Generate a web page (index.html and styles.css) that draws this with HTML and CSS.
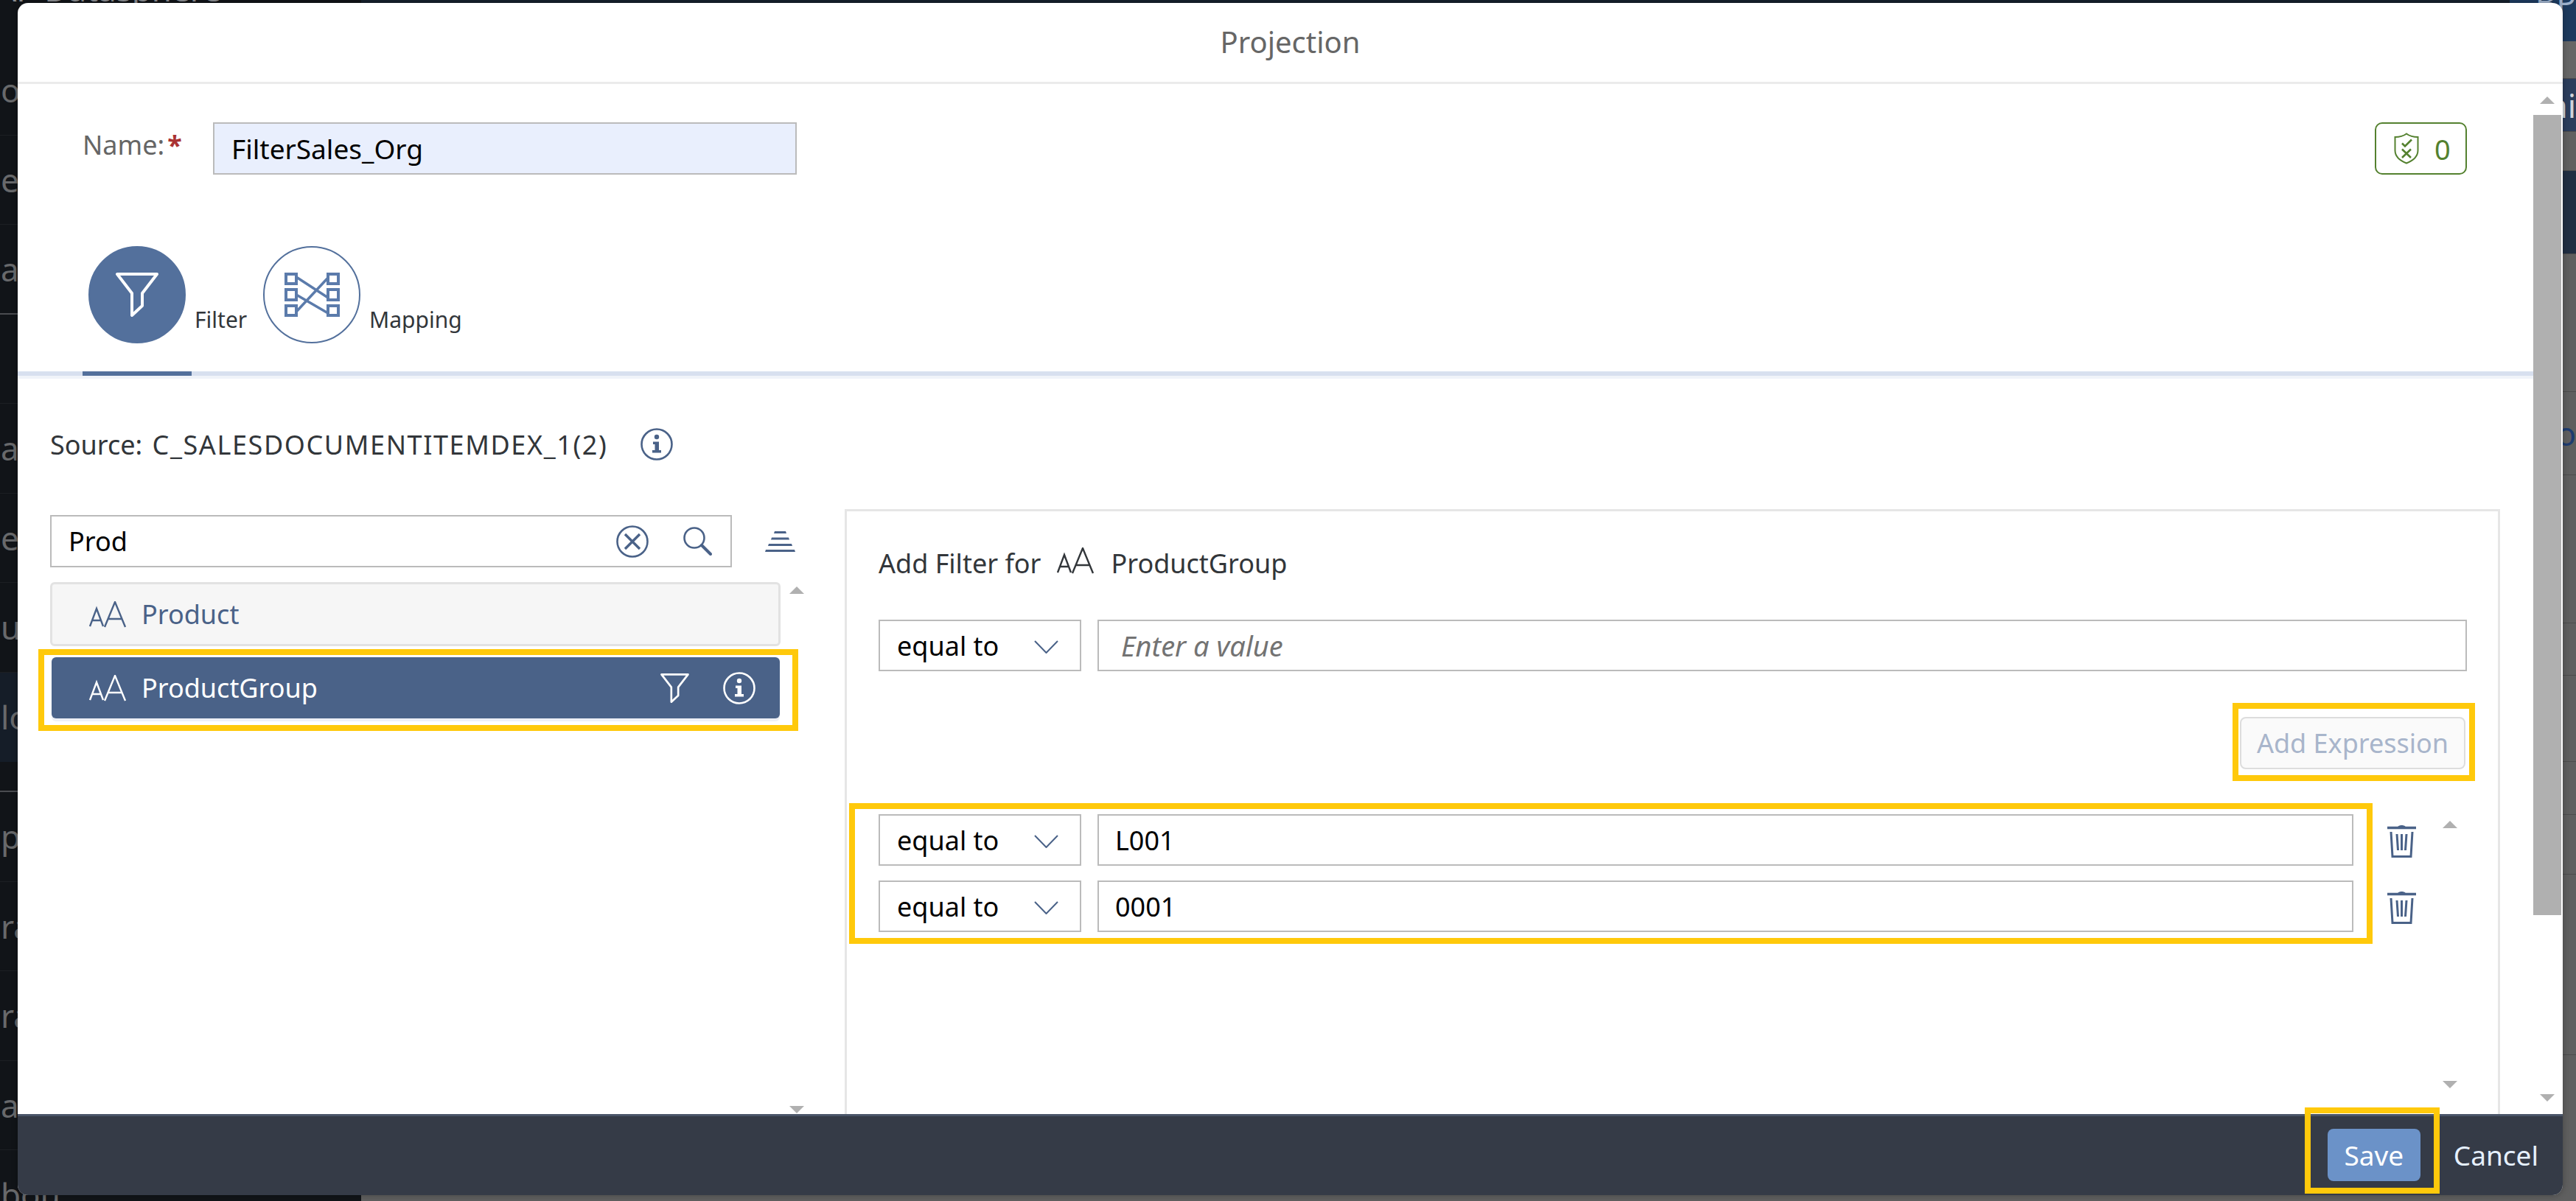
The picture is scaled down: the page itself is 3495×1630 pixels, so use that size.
FILE: index.html
```html
<!DOCTYPE html>
<html lang="en">
<head>
    <meta charset="UTF-8">
    <meta name="viewport" content="width=device-width, initial-scale=1.0">
    <title>Projection</title>
    <link rel="stylesheet" href="styles.css">
</head>
<body>
    <svg class="icon-defs" aria-hidden="true">
        <symbol id="i-funnel" viewBox="0 0 58 60">
            <path d="M2 2H56L36 28V45L22 58V28Z" fill="none" stroke="currentColor" stroke-width="4" stroke-linejoin="round"/>
        </symbol>
        <symbol id="i-info" viewBox="0 0 44 44">
            <circle cx="22" cy="22" r="20.5" fill="none" stroke="currentColor" stroke-width="2.6"/>
            <circle cx="22" cy="12" r="3.2" fill="currentColor"/>
            <path d="M17 18.5H25V30H28V33.5H16V30H19.5V22H17Z" fill="currentColor"/>
        </symbol>
        <symbol id="i-aa" viewBox="0 0 51 36">
            <path d="M1 34L10 10L19 34M4 26H16" fill="none" stroke="currentColor" stroke-width="2.4"/>
            <path d="M21 35L35 1L49 35M26 24H44" fill="none" stroke="currentColor" stroke-width="2.4"/>
        </symbol>
        <symbol id="i-chevron" viewBox="0 0 33 18">
            <path d="M1 1L16.5 17L32 1" fill="none" stroke="currentColor" stroke-width="2"/>
        </symbol>
        <symbol id="i-trash" viewBox="0 0 39 46">
            <path d="M14 5C14 1 25 1 25 5" fill="currentColor"/>
            <path d="M0 5.5H39" stroke="currentColor" stroke-width="3.5"/>
            <path d="M5 11L7 44.5H32L34 11" fill="none" stroke="currentColor" stroke-width="3"/>
            <path d="M13 14L14.5 36M19.5 14V36M26 14L24.5 36" fill="none" stroke="currentColor" stroke-width="3"/>
        </symbol>
    </svg>

    <div class="backdrop">
        <div class="bg-side">
            <div class="bg-top">SAP Datasphere</div>
            <div class="bg-row">o</div>
            <div class="bg-row">ep</div>
            <div class="bg-row bg-row-strong">at</div>
            <div class="bg-row"></div>
            <div class="bg-row">at</div>
            <div class="bg-row">er</div>
            <div class="bg-row">us</div>
            <div class="bg-row bg-row-active">lo</div>
            <div class="bg-spacer"></div>
            <div class="bg-row">pa</div>
            <div class="bg-row">ra</div>
            <div class="bg-row">ra</div>
            <div class="bg-row">at</div>
            <div class="bg-row">bou</div>
        </div>
        <div class="bg-main">
            <div class="bg-header"><div class="bg-avatar">BP</div></div>
            <div class="bg-band bg-band-a"></div>
            <div class="bg-band bg-band-b">ai</div>
            <div class="bg-band bg-band-c"></div>
            <div class="bg-band bg-band-d"></div>
            <div class="bg-band bg-band-e"></div>
            <div class="bg-band bg-band-f">o</div>
            <div class="bg-band bg-band-g"></div>
            <div class="bg-band bg-band-h"></div>
            <div class="bg-band bg-band-i"></div>
            <div class="bg-band bg-band-j"></div>
            <div class="bg-band bg-band-k"></div>
            <div class="bg-band bg-band-l"></div>
        </div>
    </div>

    <div class="modal">
        <div class="modal-header">Projection</div>

        <div class="modal-body">
            <div class="modal-main">
                <div class="name-row">
                    <div class="name-label">Name:<span class="required">*</span></div>
                    <div class="field name-field">FilterSales_Org</div>
                    <div class="status-badge">
                        <svg class="shield-icon" viewBox="0 0 34 43">
                            <path d="M17 1.5C21 4.5 27 6 32.5 6V24C32.500 32 26 38 17 41.500C8 38 1.500 32 1.500 24V6C7 6 13 4.500 17 1.500Z" fill="none" stroke="currentColor" stroke-width="2"/>
                            <path d="M11 14.500L15 18.500L24 9.500" fill="none" stroke="currentColor" stroke-width="2.600"/>
                            <path d="M11 22.500L23 34M23 22.500L11 34" fill="none" stroke="currentColor" stroke-width="2.600"/>
                        </svg>
                        <span>0</span>
                    </div>
                </div>

                <div class="tabs">
                    <div class="tab tab-active">
                        <div class="tab-circle">
                            <svg class="tab-funnel"><use href="#i-funnel"/></svg>
                        </div>
                        <div class="tab-label">Filter</div>
                    </div>
                    <div class="tab">
                        <div class="tab-circle">
                            <svg class="tab-mapping" viewBox="0 0 75 60">
                                <path d="M2 2H16V15H2ZM2 23H16V37H2ZM2 45H16V58H2ZM59 2H73V15H59ZM59 23H73V37H59ZM59 45H73V58H59Z" fill="none" stroke="currentColor" stroke-width="4"/>
                                <path d="M16 6L59 34M16 30L59 55M16 53L59 7" fill="none" stroke="currentColor" stroke-width="3.500"/>
                            </svg>
                        </div>
                        <div class="tab-label">Mapping</div>
                    </div>
                </div>
                <div class="tabs-shade"></div>

                <div class="source-row">
                    <span>Source: <span class="source-name">C_SALESDOCUMENTITEMDEX_1(2)</span></span>
                    <svg class="icon-44"><use href="#i-info"/></svg>
                </div>

                <div class="work-area">
                    <div class="column-list">
                        <div class="search-row">
                            <div class="search-box">
                                <span class="search-text">Prod</span>
                                <svg class="icon-44 clear-icon" viewBox="0 0 44 44">
                                    <circle cx="22" cy="22" r="20.500" fill="none" stroke="currentColor" stroke-width="2.600"/>
                                    <path d="M12 12L32 32M32 12L12 32" fill="none" stroke="currentColor" stroke-width="3.400"/>
                                </svg>
                                <svg class="search-icon" viewBox="0 0 39 39">
                                    <circle cx="15" cy="15" r="13.500" fill="none" stroke="currentColor" stroke-width="2.600"/>
                                    <path d="M25 25L37 37" fill="none" stroke="currentColor" stroke-width="4" stroke-linecap="round"/>
                                </svg>
                            </div>
                            <svg class="sort-icon" viewBox="0 0 41 28">
                                <path d="M13 0H28L29 3H12ZM9 8.500H32L33 11.500H8ZM5 17H36L37 20H4ZM1 25H40L41 28H0Z" fill="currentColor"/>
                            </svg>
                        </div>
                        <div class="list-wrap">
                            <div class="attr-list">
                                <div class="attr-item">
                                    <svg class="aa-icon"><use href="#i-aa"/></svg>
                                    <span>Product</span>
                                </div>
                                <div class="attr-item attr-item-selected">
                                    <svg class="aa-icon"><use href="#i-aa"/></svg>
                                    <span class="attr-name">ProductGroup</span>
                                    <svg class="item-funnel"><use href="#i-funnel"/></svg>
                                    <svg class="icon-44"><use href="#i-info"/></svg>
                                </div>
                            </div>
                            <div class="scroll-arrows list-arrows">
                                <div class="arrow-up"></div>
                                <div class="arrow-down"></div>
                            </div>
                        </div>
                    </div>

                    <div class="filter-panel">
                        <div class="filter-title">
                            <span>Add Filter for</span>
                            <svg class="aa-icon title-aa"><use href="#i-aa"/></svg>
                            <span>ProductGroup</span>
                        </div>
                        <div class="expr-row">
                            <div class="op-select">equal to<svg class="chevron"><use href="#i-chevron"/></svg></div>
                            <div class="field expr-field placeholder">Enter a value</div>
                        </div>
                        <div class="button-row">
                            <div class="btn-disabled">Add Expression</div>
                        </div>
                        <div class="expr-area">
                            <div class="expr-list">
                                <div class="expr-row">
                                    <div class="op-select">equal to<svg class="chevron"><use href="#i-chevron"/></svg></div>
                                    <div class="field expr-field">L001</div>
                                    <svg class="trash-icon"><use href="#i-trash"/></svg>
                                </div>
                                <div class="expr-row">
                                    <div class="op-select">equal to<svg class="chevron"><use href="#i-chevron"/></svg></div>
                                    <div class="field expr-field">0001</div>
                                    <svg class="trash-icon"><use href="#i-trash"/></svg>
                                </div>
                            </div>
                            <div class="scroll-arrows expr-arrows">
                                <div class="arrow-up"></div>
                                <div class="arrow-down"></div>
                            </div>
                        </div>
                    </div>
                </div>
            </div>

            <div class="modal-scroll">
                <div class="arrow-up"></div>
                <div class="scroll-thumb"></div>
                <div class="arrow-down"></div>
            </div>
        </div>

        <div class="modal-footer">
            <div class="btn-save">Save</div>
            <div class="btn-cancel">Cancel</div>
        </div>

        <!-- yellow annotation boxes drawn over the dialog -->
        <div class="mark mark-item"></div>
        <div class="mark mark-button"></div>
        <div class="mark mark-rows"></div>
        <div class="mark mark-save"></div>
    </div>
</body>
</html>
```

FILE: styles.css
```css
* {
    box-sizing: border-box;
}

html, body {
    height: 100%;
}

body {
    margin: 0;
    overflow: hidden;
    font-family: "Noto Sans", sans-serif;
    font-size: 36px;
    color: #32363a;
    background: #111418;
}

.icon-defs {
    display: none;
}

/* app behind the dialog */
.backdrop {
    position: fixed;
    inset: 0;
    display: flex;
}

.bg-side {
    width: 490px;
    background: #111418;
    overflow: hidden;
    color: #68696b;
    font-size: 44px;
}

.bg-top {
    height: 62px;
    margin: -46px 0 46px -30px;
    color: #8a8c90;
    line-height: 62px;
    white-space: nowrap;
}

.bg-row {
    height: 121.500px;
    line-height: 121.500px;
    padding-left: 1px;
    border-bottom: 1px solid #1c1f23;
}

.bg-row-strong {
    border-bottom: 2px solid #4a4c50;
}

.bg-row-active {
    background: #151d28;
    border-bottom: none;
}

.bg-spacer {
    height: 41px;
    border-bottom: 2px solid #4a4c50;
}

.bg-main {
    flex: 1;
    background: #5f5f5f;
    color: #d0d4da;
    font-size: 44px;
    text-align: right;
    overflow: hidden;
}

.bg-header {
    height: 64px;
    background: linear-gradient(90deg, #16202c 97%, #1d3a5e 97%);
}

.bg-avatar {
    height: 46px;
    line-height: 20px;
    margin-top: -8px;
    color: #9fb2cc;
    overflow: hidden;
}

.bg-band {
    border-bottom: 1px solid #4c4c4c;
}

.bg-band-a { height: 51px; background: #666; }
.bg-band-b { height: 72px; line-height: 72px; background: #2b3d5c; }
.bg-band-c { height: 53px; background: #606060; }
.bg-band-d { height: 113px; background: #202e42; }
.bg-band-e { height: 187px; }
.bg-band-f { height: 113px; line-height: 113px; color: #1e3c70; }
.bg-band-g { height: 201px; }
.bg-band-h { height: 71px; }
.bg-band-i { height: 117px; }
.bg-band-j { height: 72px; }
.bg-band-k { height: 81px; }
.bg-band-l { height: 245px; }

/* dialog */
.modal {
    position: fixed;
    left: 24px;
    top: 4px;
    width: 3453px;
    height: 1618px;
    display: flex;
    flex-direction: column;
    background: #fff;
    border-radius: 14px;
    overflow: hidden;
    box-shadow: 0 0 8px rgba(0, 0, 0, 0.3);
}

.modal-header {
    flex: none;
    height: 110px;
    padding-bottom: 3px;
    border-bottom: 3px solid #ebebeb;
    display: flex;
    align-items: center;
    justify-content: center;
    color: #666;
    font-size: 40px;
}

.modal-body {
    flex: 1;
    min-height: 0;
    display: flex;
}

.modal-main {
    flex: 1;
    min-width: 0;
    display: flex;
    flex-direction: column;
}

.modal-scroll {
    flex: none;
    width: 40px;
    padding: 17px 2px 16px 0;
    display: flex;
    flex-direction: column;
    align-items: center;
}

.scroll-thumb {
    width: 38px;
    height: 1086px;
    margin-top: 15px;
    margin-bottom: 243px;
    background: #b0b0b0;
}

.arrow-up,
.arrow-down {
    width: 0;
    height: 0;
    border-left: 10px solid transparent;
    border-right: 10px solid transparent;
}

.arrow-up {
    border-bottom: 10px solid #b0b0b0;
}

.arrow-down {
    border-top: 10px solid #b0b0b0;
}

.name-row {
    margin-top: 52px;
    padding: 0 90px 0 88px;
    display: flex;
    align-items: stretch;
    height: 71px;
}

.name-label {
    width: 177px;
    line-height: 62px;
    color: #666;
}

.required {
    color: #a33;
    font-weight: 700;
    margin-left: 4px;
}

.field {
    border: 2px solid #bbb;
    background: #fff;
    color: #000;
    display: flex;
    align-items: center;
    padding: 0 23px;
}

.name-field {
    width: 792px;
    background: #e9effd;
    font-size: 37px;
}

.status-badge {
    margin-left: auto;
    width: 125px;
    border: 2px solid #54812f;
    border-radius: 10px;
    color: #54812f;
    display: flex;
    align-items: center;
    padding-left: 24px;
    gap: 21px;
    font-size: 38px;
}

.shield-icon {
    width: 34px;
    height: 43px;
}

.tabs {
    margin-top: 97px;
    height: 176px;
    padding-left: 88px;
    display: flex;
    border-bottom: 6px solid #d8e0ef;
}

.tab {
    width: 238px;
    display: flex;
    height: 176px;
    margin-right: 7px;
    position: relative;
}

.tab + .tab {
    width: auto;
}

.tab-active::after {
    content: "";
    position: absolute;
    left: 0;
    bottom: 0;
    width: 148px;
    height: 6px;
    background: #53709c;
}

.tab-circle {
    width: 132px;
    height: 132px;
    margin-left: 8px;
    border-radius: 50%;
    border: 2px solid #53709c;
    color: #5b7bab;
    display: flex;
    align-items: center;
    justify-content: center;
}

.tab-active .tab-circle {
    background: #53709c;
    color: #fff;
}

.tab + .tab .tab-circle {
    margin-left: 0;
}

.tab-funnel {
    width: 58px;
    height: 60px;
}

.tab-mapping {
    width: 75px;
    height: 60px;
}

.tab-label {
    margin-left: 12px;
    margin-top: 79px;
    font-size: 30px;
    line-height: 42px;
}

.tabs-shade {
    height: 4px;
    background: #f0f3f9;
}

.source-row {
    margin-top: 67px;
    height: 44px;
    padding-left: 44px;
    display: flex;
    align-items: center;
    gap: 45px;
}

.source-name {
    margin-left: 4px;
    letter-spacing: 1.600px;
}

.icon-44 {
    flex: none;
    width: 44px;
    height: 44px;
    color: #4a6288;
}

.work-area {
    flex: 1;
    min-height: 0;
    margin-top: 66px;
    padding: 0 45px 0 44px;
    display: flex;
}

.column-list {
    flex: none;
    width: 1078px;
    padding-top: 8px;
    display: flex;
    flex-direction: column;
}

.search-row {
    display: flex;
    align-items: center;
    height: 71px;
}

.search-box {
    width: 925px;
    height: 71px;
    border: 2px solid #bbb;
    padding: 0 25px 0 23px;
    display: flex;
    align-items: center;
    color: #000;
}

.search-text {
    flex: 1;
}

.clear-icon {
    margin-right: 47px;
}

.search-icon {
    width: 39px;
    height: 39px;
    color: #4a6288;
}

.sort-icon {
    width: 41px;
    height: 28px;
    margin-left: 45px;
    color: #4a6288;
}

.list-wrap {
    flex: 1;
    min-height: 0;
    margin-top: 20px;
    display: flex;
}

.attr-list {
    width: 991px;
}

.attr-item {
    height: 87px;
    padding: 0 22px 0 50px;
    background: #f6f6f6;
    border: 3px solid #e2e2e2;
    border-radius: 6px;
    color: #4a6288;
    display: flex;
    align-items: center;
    gap: 20px;
}

.attr-item-selected {
    height: 83px;
    margin: 15px 1px 0 2px;
    padding: 0 33px 0 51px;
    background: #4a6288;
    border: none;
    color: #fff;
    box-shadow: 0 4px 0 #eef0f6;
    gap: 20px;
}

.attr-item-selected .icon-44 {
    color: #fff;
    margin-left: 26px;
}

.attr-name {
    flex: 1;
}

.aa-icon {
    flex: none;
    width: 51px;
    height: 36px;
}

.item-funnel {
    width: 39px;
    height: 40px;
}

.scroll-arrows {
    display: flex;
    flex-direction: column;
    justify-content: space-between;
    align-items: center;
    width: 20px;
}

.list-arrows {
    margin-left: 12px;
    padding: 6px 0 1px;
}

.filter-panel {
    flex: 1;
    min-width: 0;
    padding: 48px 42px 0 43px;
    border: 3px solid #e6e6e6;
    border-bottom: none;
}

.filter-title {
    height: 44px;
    margin-bottom: 55px;
    display: flex;
    align-items: center;
}

.title-aa {
    margin: -6px 22px 0 22px;
    color: #32363a;
}

.expr-row {
    display: flex;
    height: 70px;
}

.op-select {
    flex: none;
    width: 275px;
    border: 2px solid #bbb;
    padding: 0 29px 0 23px;
    display: flex;
    align-items: center;
    justify-content: space-between;
    color: #000;
}

.chevron {
    width: 33px;
    height: 18px;
    color: #4a6288;
    margin-top: 4px;
}

.expr-field {
    flex: 1;
    min-width: 0;
    margin-left: 22px;
    padding: 0 22px;
}

.placeholder {
    padding-left: 30px;
    color: #737373;
    font-style: italic;
    font-size: 38px;
}

.button-row {
    margin-top: 62px;
    padding-right: 2px;
    display: flex;
    justify-content: flex-end;
}

.btn-disabled {
    width: 306px;
    height: 71px;
    background: #fafafa;
    border: 2px solid #ddd;
    border-radius: 8px;
    color: #a8b5cb;
    display: flex;
    align-items: center;
    justify-content: center;
}

.expr-area {
    margin-top: 61px;
    display: flex;
    height: 372px;
}

.expr-list {
    width: 2086px;
    display: flex;
    flex-direction: column;
    gap: 20px;
}

.trash-icon {
    flex: none;
    width: 39px;
    height: 46px;
    margin: 13px 0 0 46px;
    color: #4a6288;
}

.expr-arrows {
    margin-left: 36px;
    padding-top: 9px;
}

.modal-footer {
    flex: none;
    height: 110px;
    border-top: 3px solid #4a5568;
    background: #353b47;
    padding-top: 17px;
    padding-right: 33px;
    display: flex;
    align-items: flex-start;
    justify-content: flex-end;
    color: #e6f0ff;
    font-size: 37px;
}

.btn-save {
    width: 126px;
    height: 71px;
    background: #6b92c8;
    border-radius: 8px;
    color: #fff;
    display: flex;
    align-items: center;
    justify-content: center;
}

.btn-cancel {
    height: 71px;
    margin-left: 45px;
    display: flex;
    align-items: center;
}

/* annotation boxes, placed on the dialog */
.mark {
    position: absolute;
    border: 8px solid #ffc90b;
    pointer-events: none;
}

.mark-item { left: 28px; top: 877px; width: 1031px; height: 111px; }
.mark-button { left: 3005px; top: 950px; width: 329px; height: 106px; }
.mark-rows { left: 1128px; top: 1086px; width: 2067px; height: 191px; }
.mark-save { left: 3103px; top: 1499px; width: 183px; height: 117px; }
```
